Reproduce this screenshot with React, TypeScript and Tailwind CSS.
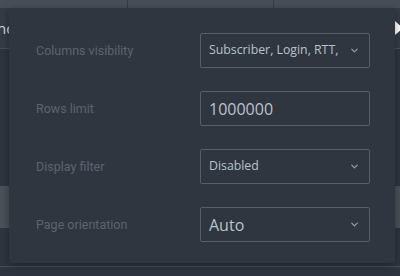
import { ChevronDown } from 'lucide-react';

const rows = [
  { label: 'Columns visibility', value: 'Subscriber, Login, RTT,', select: true, big: false },
  { label: 'Rows limit', value: '1000000', select: false, big: true },
  { label: 'Display filter', value: 'Disabled', select: true, big: false },
  { label: 'Page orientation', value: 'Auto', select: true, big: true },
];

const App = () => {
  return (
    <div className="relative w-[400px] h-[276px] overflow-hidden bg-[#2e3540] font-['Roboto',sans-serif]">
      {/* page behind the popup */}
      <div className="flex h-[8px] bg-[#474e58]">
        <div className="w-[128px] border-r border-[#363c45]" />
        <div className="w-[146px] border-r border-[#363c45]" />
        <div className="flex-1" />
      </div>
      <div className="flex h-[41px] items-center justify-between bg-[#343b45] border-b border-[#4a5059]">
        <span className="text-[15px] text-[#d6dbe0] -ml-[3px] font-['Open_Sans',sans-serif]">nc</span>
        <span className="mr-[-3px] w-0 h-0 border-y-[7px] border-y-transparent border-l-[8px] border-l-white" />
      </div>
      <div className="h-[137px]" />
      <div className="flex h-[42px] justify-between">
        <div className="w-[9px] bg-[#4b5159]" />
        <div className="w-[6px] bg-[#4b5159]" />
      </div>
      <div className="h-[39px] border-b border-[#4a5059]" />

      {/* popup */}
      <div className="absolute left-[9px] top-[8px] w-[386px] h-[255px] rounded-[3px] bg-[#2f3640] shadow-[0_2px_8px_rgba(0,0,0,0.35)] pt-[25px] pl-[27px]">
        <div className="grid grid-cols-[164px_170px] gap-y-[23px]">
          {rows.map((r) => (
            <div key={r.label} className="contents">
              <div className="flex items-center pt-[2px] text-[12.5px] text-[#5c6470]">{r.label}</div>
              <div className="flex h-[35px] items-center justify-between border border-[#565e68] rounded-[2px] pl-[8px] pr-[9px] font-['Open_Sans',sans-serif] text-[#b9c3cd]">
                <span className={r.big ? 'text-[16px]' : 'text-[12.3px]'}>{r.value}</span>
                {r.select && <ChevronDown size={11} strokeWidth={2.5} className="text-[#9aa3ad]" />}
              </div>
            </div>
          ))}
        </div>
      </div>
    </div>
  );
};

export default App;
